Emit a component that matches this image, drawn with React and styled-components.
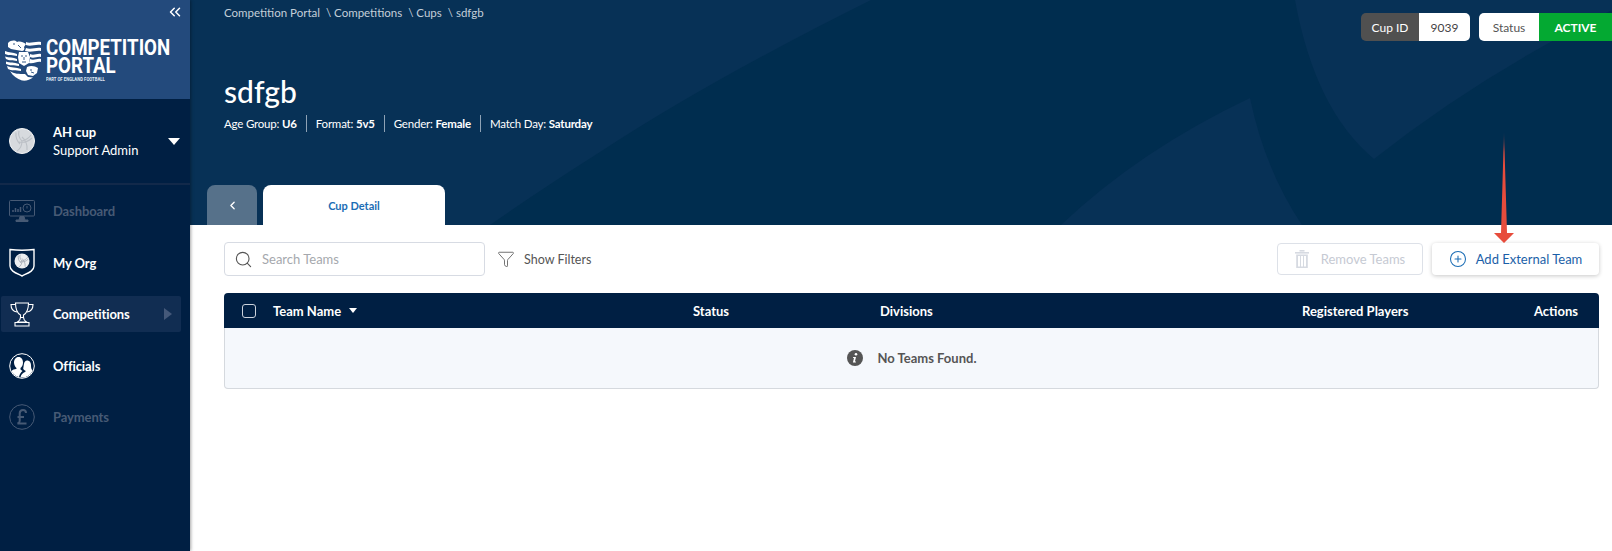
import styled, { createGlobalStyle } from "styled-components";
import { ChevronsLeft, ChevronLeft, Search, Funnel, CirclePlus } from "lucide-react";

const GlobalStyle = createGlobalStyle`
  html, body {
    margin: 0;
    padding: 0;
    background: #fff;
    font-family: "Lato", "Noto Sans", sans-serif;
  }
  * { box-sizing: border-box; }
`;

const Page = styled.div`
  position: relative;
  display: flex;
  width: 100%;
  height: 100vh;
  overflow: hidden;
  background: #fff;
`;

const Sidebar = styled.aside`
  flex: 0 0 190px;
  min-width: 0;
  background: #001f43;
  color: #fff;
  box-shadow: 1px 0 3px rgba(0, 0, 0, 0.35);
  z-index: 2;
`;

const LogoBlock = styled.div`
  position: relative;
  height: 99px;
  padding: 39px 0 0 5px;
  background: #234a7c;
  display: flex;
  gap: 5px;
`;

const Collapse = styled.button`
  position: absolute;
  top: 3px;
  right: 6px;
  padding: 0;
  border: none;
  background: none;
  color: #fff;
  display: flex;
`;

const Wordmark = styled.div`
  width: 140px;
  font-family: "Roboto", sans-serif;
  font-weight: 700;
  color: #fff;
  transform: scaleX(0.85);
  transform-origin: left top;
  white-space: nowrap;
`;

const WordLine = styled.div`
  font-size: 22px;
  line-height: 18px;
`;

const Tagline = styled.div`
  font-size: 5px;
  font-weight: 700;
  line-height: 7px;
  margin-top: 1px;
  color: #dfe7f2;
`;

const UserBlock = styled.div`
  height: 86px;
  padding: 0 10px 0 9px;
  display: flex;
  align-items: center;
  gap: 18px;
  border-bottom: 2px solid #12294a;
`;

const Avatar = styled.div`
  width: 26px;
  height: 26px;
  border-radius: 50%;
  background: #d7dade;
  border: 1px solid #f4f5f6;
  display: flex;
  align-items: center;
  justify-content: center;
`;

const UserText = styled.div`
  flex: 1;
  font-size: 13px;
  line-height: 18px;
`;

const UserName = styled.div`
  font-weight: 700;
`;

const DownCaret = styled.span`
  width: 0;
  height: 0;
  border-left: 6px solid transparent;
  border-right: 6px solid transparent;
  border-top: 7px solid #fff;
`;

const Nav = styled.nav`
  padding: 8px 0 0 1px;
  display: flex;
  flex-direction: column;
  gap: 15.5px;
`;

const NavRow = styled.div`
  position: relative;
  width: 180px;
  height: 36px;
  padding-left: 6px;
  display: flex;
  align-items: center;
  gap: 16px;
  border-radius: 2px;
  font-size: 13px;
  font-weight: 700;
  letter-spacing: -0.1px;
  color: ${(p) => (p.$muted ? "#475a75" : "#fff")};
  background: ${(p) => (p.$active ? "#112d52" : "transparent")};
`;

const NavIcon = styled.span`
  width: 30px;
  height: 30px;
  display: flex;
  align-items: center;
  justify-content: center;
`;

const NavLabel = styled.span`
  flex: 1;
`;

const SideArrow = styled.span`
  width: 0;
  height: 0;
  margin-right: 9px;
  border-top: 6.5px solid transparent;
  border-bottom: 6.5px solid transparent;
  border-left: 8px solid #45597a;
`;

const Main = styled.main`
  flex: 1;
  min-width: 0;
`;

const Hero = styled.header`
  position: relative;
  height: 225px;
  padding-left: 34px;
  background: #002d4f;
  color: #fff;
  overflow: hidden;
`;

const HeroArt = styled.svg`
  position: absolute;
  inset: 0;
  width: 100%;
  height: 100%;
`;

const HeroContent = styled.div`
  position: relative;
  height: 100%;
  display: flex;
  flex-direction: column;
`;

const TopRow = styled.div`
  display: flex;
  justify-content: space-between;
  align-items: flex-start;
`;

const Breadcrumb = styled.div`
  padding-top: 5px;
  font-size: 11.5px;
  line-height: 15px;
  color: #c3ced9;
  display: flex;
  gap: 6px;
`;

const Badges = styled.div`
  padding-top: 13px;
  display: flex;
  gap: 9px;
`;

const Badge = styled.div`
  display: flex;
  height: 28px;
  overflow: hidden;
  border-radius: ${(p) => (p.$flush ? "5px 0 0 5px" : "5px")};
`;

const BadgePart = styled.div`
  width: ${(p) => p.$w}px;
  display: flex;
  align-items: center;
  justify-content: center;
  font-size: 12px;
  font-weight: ${(p) => (p.$bold ? 700 : 400)};
  color: ${(p) => p.$fg};
  background: ${(p) => p.$bg};
`;

const Title = styled.h1`
  margin: 33px 0 0;
  font-size: 30px;
  line-height: 34px;
  font-weight: 500;
  color: #fff;
`;

const Meta = styled.div`
  margin-top: 7px;
  display: flex;
  align-items: center;
  font-size: 11.5px;
  letter-spacing: -0.2px;
  height: 17px;
`;

const MetaItem = styled.span`
  padding: 0 9px;
  height: 17px;
  line-height: 17px;
  border-left: 1px solid #8ea2b5;
  &:first-child {
    padding-left: 0;
    border-left: none;
  }
  b { font-weight: 700; }
`;

const Tabs = styled.div`
  margin-top: auto;
  margin-left: -17px;
  display: flex;
  gap: 6px;
`;

const BackTab = styled.div`
  width: 50px;
  height: 40px;
  border-radius: 8px 8px 0 0;
  background: #56718a;
  display: flex;
  align-items: center;
  justify-content: center;
  color: #fff;
`;

const Tab = styled.div`
  width: 182px;
  height: 40px;
  border-radius: 8px 8px 0 0;
  background: #fff;
  color: #1b6db5;
  font-size: 11px;
  font-weight: 700;
  display: flex;
  align-items: center;
  justify-content: center;
`;

const Body = styled.section`
  padding: 17px 13px 0 34px;
`;

const Toolbar = styled.div`
  height: 34px;
  display: flex;
  align-items: center;
`;

const SearchBox = styled.div`
  width: 261px;
  height: 34px;
  padding: 0 9px;
  border: 1px solid #d7dbe3;
  border-radius: 4px;
  display: flex;
  align-items: center;
  gap: 9px;
  color: #555;
`;

const SearchInput = styled.input`
  flex: 1;
  min-width: 0;
  border: none;
  outline: none;
  padding: 0;
  font: 400 13px "Lato", sans-serif;
  &::placeholder { color: #a5a8ad; }
`;

const Filters = styled.div`
  margin-left: 12px;
  display: flex;
  align-items: center;
  gap: 9px;
  font-size: 12.5px;
  color: #555;
`;

const Spacer = styled.div`
  flex: 1;
`;

const ActionButton = styled.button`
  height: 32px;
  width: ${(p) => p.$w}px;
  margin-left: 9px;
  padding: 0;
  display: flex;
  align-items: center;
  justify-content: center;
  gap: ${(p) => p.$gap}px;
  font: 400 13px "Lato", sans-serif;
  background: #fff;
  border-radius: 4px;
  border: ${(p) => (p.$ghost ? "1px solid #dde1e8" : "none")};
  color: ${(p) => (p.$ghost ? "#c6cad3" : "#1b5fa8")};
  box-shadow: ${(p) => (p.$ghost ? "none" : "0 1px 4px rgba(0, 0, 0, 0.22)")};
`;

const Table = styled.div`
  margin-top: 17px;
`;

const HeadRow = styled.div`
  height: 35px;
  padding-left: 18px;
  display: grid;
  grid-template-columns: 31px 420px 187px 422px 232px 1fr;
  align-items: center;
  background: #001f43;
  border-radius: 4px 4px 0 0;
  color: #fff;
  font-size: 13px;
  font-weight: 700;
`;

const HeadCell = styled.div`
  display: flex;
  align-items: center;
  gap: 8px;
  white-space: nowrap;
`;

const Checkbox = styled.span`
  width: 14px;
  height: 14px;
  border: 1px solid #cbd2dc;
  border-radius: 3px;
`;

const SmallCaret = styled.span`
  width: 0;
  height: 0;
  border-left: 4.5px solid transparent;
  border-right: 4.5px solid transparent;
  border-top: 5px solid #fff;
`;

const EmptyRow = styled.div`
  height: 61px;
  display: flex;
  align-items: center;
  justify-content: center;
  gap: 15px;
  background: #f5f8fc;
  border: 1px solid #d5d9de;
  border-top: none;
  border-radius: 0 0 4px 4px;
  font-size: 13px;
  font-weight: 700;
  color: #555;
`;

const Pointer = styled.svg`
  position: absolute;
  left: 1492px;
  top: 132px;
  z-index: 3;
`;

const Crest = () => (
  <svg width="36" height="42" viewBox="0 0 36 42">
    <g fill="#fff">
      <path d="M3 4 C6 1 10 1 12 3 C15 2 18 3 21 5 L19 8 C20 10 19 12 17 12 L6 10 L3 8Z" />
      <path d="M21 3 C25 5 30 2 36 3 V6 C30 5 26 8 21 6Z" />
      <path d="M21 9 C26 11 31 8 36 9 V12 C31 11 26 14 20 12Z" />
      <path d="M0 12 C4 14 8 13 12 15 V17 C8 16 4 17 0 15Z" />
      <path d="M0 17.5 C4 19 8 18 12 20 V22 C8 21 4 22 1 20Z" />
      <path d="M1 22.5 C5 24 9 23 14 25 V27 C9 26 5 27 1 25Z" />
      <path d="M2 27 C6 29 11 28 16 30 V32 C11 31 6 32 3 30Z" />
      <path d="M25 15 C29 17 32 14 36 15 V18 C32 17 29 20 25 18Z" />
      <path d="M25 20 C29 22 32 19 36 20 V23 C32 22 29 25 24 24Z" />
      <path d="M14 13 L23 13 L25 18 L24 24 L19 27 L14 24 L13 18Z" />
      <path d="M22 28 C26 26 30 27 33 29 L32 34 L28 37 L23 36 L21 32Z" />
      <path d="M5 32 C9 35 14 35 20 35 L23 38 L28 38.5 C25 41 21 42 17 41.5 C12 40 8 37 5 32Z" />
    </g>
    <g fill="none" stroke="#234a7c" strokeWidth="0.9">
      <path d="M16 17 H18 M20 17 H22 M19 18 V21 M17 23 H21" />
      <path d="M8 5 H10 M13 6 L16 9" />
      <path d="M25 31 H27 M26 33 L29 34" />
    </g>
  </svg>
);

// same panelled ball in the avatar and in the shield
const Ball = ({ size, seam }) => (
  <svg width={size} height={size} viewBox="0 0 24 24" fill="none" stroke={seam} strokeWidth="1.1">
    <path d="M12 12 C9 9 8 6 9 2 M12 12 C16 11 19 9 21 6 M12 12 C12 16 10 20 7 22" />
    <path d="M6 3.5 C5.5 8 7 12 10 15 M22 9 C18 13 14 14 9 13 M17 21 C17.5 16 15.5 11 12 8" />
  </svg>
);

const MonitorIcon = () => (
  <svg width="26" height="22" viewBox="0 0 26 22" fill="none" stroke="#475a75">
    <rect x="0.5" y="0.5" width="25" height="15.5" rx="1" />
    <path d="M4 12 v-2 M6.5 12 v-4 M9 12 v-3 M11.5 12 v-5" strokeWidth="1.5" />
    <circle cx="18" cy="8" r="4" />
    <path d="M18 6 v2.5" />
    <path d="M10 20 L11 16.5 H15 L16 20 H19 V21.5 H7 V20Z" fill="#475a75" />
  </svg>
);

const ShieldIcon = () => (
  <svg width="26" height="29" viewBox="0 0 26 29" fill="none">
    <path d="M1 1.5 C9 2.5 17 2.5 25 1.5 V18 C25 23 19 25 13 28 C7 25 1 23 1 18Z" stroke="#fff" strokeWidth="1.4" />
    <circle cx="13" cy="13" r="7.5" fill="#eceef0" />
    <svg x="5.5" y="5.5" width="15" height="15" viewBox="0 0 24 24" fill="none" stroke="#a2a9b3" strokeWidth="1.3">
      <path d="M12 12 C9 9 8 6 9 2 M12 12 C16 11 19 9 21 6 M12 12 C12 16 10 20 7 22" />
      <path d="M6 3.5 C5.5 8 7 12 10 15 M22 9 C18 13 14 14 9 13 M17 21 C17.5 16 15.5 11 12 8" />
    </svg>
  </svg>
);

const TrophyIcon = () => (
  <svg width="24" height="25" viewBox="0 0 24 25" fill="none" stroke="#fff" strokeWidth="1.1">
    <path d="M5.5 1 H18.5 C18.5 7 17 11 13.5 13 V15.5 H10.5 V13 C7 11 5.5 7 5.5 1Z" />
    <path d="M5.5 2.5 H1 C1 7 3 9.5 7 10 M18.5 2.5 H23 C23 7 21 9.5 17 10" />
    <path d="M10.5 15.5 C10.5 18 9 19 7.5 20 H16.5 C15 19 13.5 18 13.5 15.5" />
    <path d="M5 20.5 H19 V24 H5Z" />
  </svg>
);

const PeopleIcon = () => (
  <svg width="26" height="26" viewBox="0 0 26 26">
    <circle cx="13" cy="13" r="12.3" fill="#001f43" stroke="#fff" strokeWidth="1" />
    <path d="M9.5 4 C12.5 4 14 6.5 14 9.5 C14 12 13 14 11.5 15 V16.5 L13.5 18 C11.5 19.5 10.5 21.5 10 24 C6.5 23.2 3.7 21 2.3 18 C3.5 16.8 5.5 16.3 7.5 15.8 V15 C6 13.8 5 11.5 5 9.5 C5 6.5 6.8 4 9.5 4Z" fill="#fff" />
    <path d="M18 7.5 C20.8 7.5 22 9.8 22 12.5 C22 14.8 22.3 16.3 23.7 17.5 C22.3 20.8 19.5 23.3 16 24.3 L11.5 24.4 C12 21.5 13.5 20 16.5 18.8 V17.8 C15 17.2 14.5 16.5 14.2 15.5 C15 13 14.5 7.5 18 7.5Z" fill="#fff" />
  </svg>
);

const PoundIcon = () => (
  <svg width="26" height="26" viewBox="0 0 26 26" fill="none" stroke="#475a75">
    <circle cx="13" cy="13" r="12.3" />
    <path d="M17 9 C17 7 15.5 6 14 6 C12 6 10.7 7.5 10.7 9.5 V17 C10.7 18 10 19 8.5 19.5 H17.5 M8.5 13 H15" strokeWidth="2" />
  </svg>
);

const TrashIcon = () => (
  <svg width="14" height="18" viewBox="0 0 14 18" fill="#d6dae1">
    <rect x="0" y="2" width="14" height="1.6" />
    <rect x="4.5" y="0" width="5" height="1.6" />
    <path d="M1.2 4.6 H12.8 V18 H1.2Z M3 6 V16.5 H5 V6Z M6 6 V16.5 H8 V6Z M9 6 V16.5 H11 V6Z" fillRule="evenodd" />
  </svg>
);

const InfoIcon = () => (
  <svg width="16" height="16" viewBox="0 0 16 16">
    <circle cx="8" cy="8" r="8" fill="#555" />
    <circle cx="9" cy="4.3" r="1.3" fill="#fff" />
    <path d="M6.2 7 H9 L7.9 11.4 H9 L8.8 12.4 H5.9 L7 8 H6Z" fill="#fff" />
  </svg>
);

const App = () => (
  <>
    <GlobalStyle />
    <Page>
      <Sidebar>
        <LogoBlock>
          <Collapse>
            <ChevronsLeft size={18} strokeWidth={2} />
          </Collapse>
          <Crest />
          <Wordmark>
            <WordLine>COMPETITION</WordLine>
            <WordLine>PORTAL</WordLine>
            <Tagline>PART OF ENGLAND FOOTBALL</Tagline>
          </Wordmark>
        </LogoBlock>
        <UserBlock>
          <Avatar>
            <Ball seam="#bcc0c6" size={24} />
          </Avatar>
          <UserText>
            <UserName>AH cup</UserName>
            <div>Support Admin</div>
          </UserText>
          <DownCaret />
        </UserBlock>
        <Nav>
          <NavRow $muted>
            <NavIcon><MonitorIcon /></NavIcon>
            <NavLabel>Dashboard</NavLabel>
          </NavRow>
          <NavRow>
            <NavIcon><ShieldIcon /></NavIcon>
            <NavLabel>My Org</NavLabel>
          </NavRow>
          <NavRow $active>
            <NavIcon><TrophyIcon /></NavIcon>
            <NavLabel>Competitions</NavLabel>
            <SideArrow />
          </NavRow>
          <NavRow>
            <NavIcon><PeopleIcon /></NavIcon>
            <NavLabel>Officials</NavLabel>
          </NavRow>
          <NavRow $muted>
            <NavIcon><PoundIcon /></NavIcon>
            <NavLabel>Payments</NavLabel>
          </NavRow>
        </Nav>
      </Sidebar>
      <Main>
        <Hero>
          <HeroArt viewBox="0 0 1422 225" preserveAspectRatio="none">
            <g fill="#073156">
              <path d="M0 0 H681 Q520 80 410 152 Q350 190 300 225 H0Z" />
              <path d="M871 225 Q950 150 1060 98 Q1075 170 1112 225Z" />
              <path d="M1105 0 Q1125 110 1184 159 Q1290 75 1422 10 V0Z" />
            </g>
          </HeroArt>
          <HeroContent>
            <TopRow>
              <Breadcrumb>
                <span>Competition Portal</span>
                <span>\ Competitions</span>
                <span>\ Cups</span>
                <span>\ sdfgb</span>
              </Breadcrumb>
              <Badges>
                <Badge>
                  <BadgePart $w={58} $bg="#505050" $fg="#fff">Cup ID</BadgePart>
                  <BadgePart $w={51} $bg="#fff" $fg="#444">9039</BadgePart>
                </Badge>
                <Badge $flush>
                  <BadgePart $w={60} $bg="#fff" $fg="#555">Status</BadgePart>
                  <BadgePart $w={73} $bg="#04a932" $fg="#fff" $bold>ACTIVE</BadgePart>
                </Badge>
              </Badges>
            </TopRow>
            <Title>sdfgb</Title>
            <Meta>
              <MetaItem>Age Group: <b>U6</b></MetaItem>
              <MetaItem>Format: <b>5v5</b></MetaItem>
              <MetaItem>Gender: <b>Female</b></MetaItem>
              <MetaItem>Match Day: <b>Saturday</b></MetaItem>
            </Meta>
            <Tabs>
              <BackTab><ChevronLeft size={13} strokeWidth={2.5} /></BackTab>
              <Tab>Cup Detail</Tab>
            </Tabs>
          </HeroContent>
        </Hero>
        <Body>
          <Toolbar>
            <SearchBox>
              <Search size={19} strokeWidth={1.4} />
              <SearchInput placeholder="Search Teams" />
            </SearchBox>
            <Filters>
              <Funnel size={18} strokeWidth={1.1} />
              Show Filters
            </Filters>
            <Spacer />
            <ActionButton $ghost $w={146} $gap={12}>
              <TrashIcon />
              Remove Teams
            </ActionButton>
            <ActionButton $w={167} $gap={9}>
              <CirclePlus size={18} strokeWidth={1.4} color="#1b6db5" />
              Add External Team
            </ActionButton>
          </Toolbar>
          <Table>
            <HeadRow>
              <Checkbox />
              <HeadCell>Team Name <SmallCaret /></HeadCell>
              <HeadCell>Status</HeadCell>
              <HeadCell>Divisions</HeadCell>
              <HeadCell>Registered Players</HeadCell>
              <HeadCell>Actions</HeadCell>
            </HeadRow>
            <EmptyRow>
              <InfoIcon />
              No Teams Found.
            </EmptyRow>
          </Table>
        </Body>
      </Main>
      <Pointer width="24" height="112" viewBox="0 0 24 112">
        <defs>
          <linearGradient id="fade" x1="0" y1="0" x2="0" y2="1">
            <stop offset="0" stopColor="#e74c3c" stopOpacity="0.1" />
            <stop offset="0.18" stopColor="#e74c3c" />
          </linearGradient>
        </defs>
        <path d="M12 0 L15 101 H22 L12 111 L2 101 H9Z" fill="url(#fade)" />
      </Pointer>
    </Page>
  </>
);

export default App;
